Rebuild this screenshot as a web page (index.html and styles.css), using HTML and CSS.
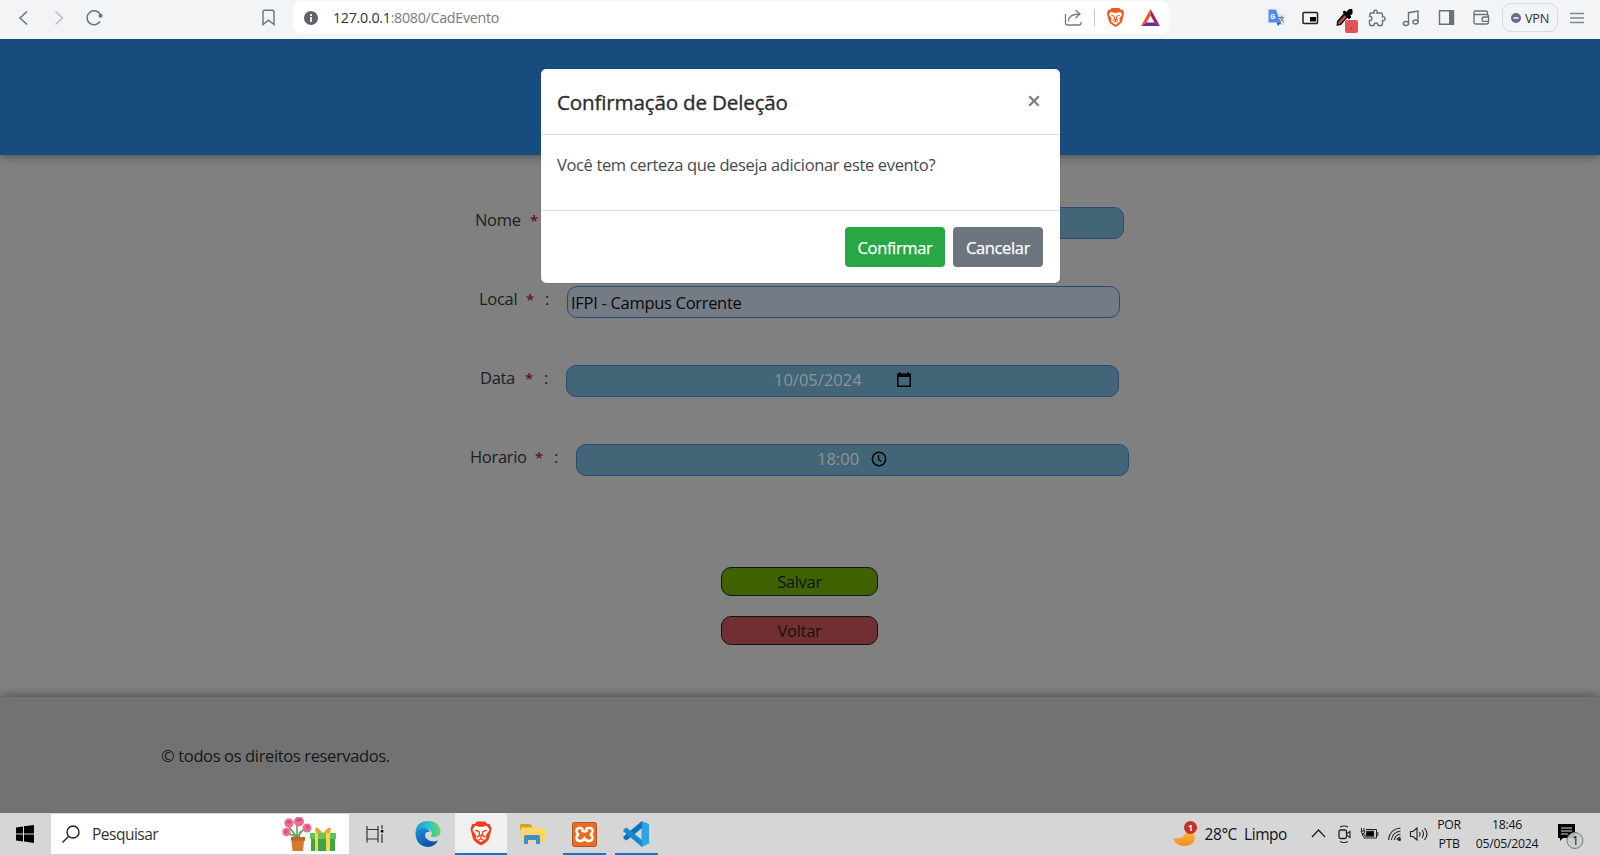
FILE: index.html
```html
<!DOCTYPE html>
<html lang="pt-BR">
<head>
<meta charset="utf-8">
<title>CadEvento</title>
<link rel="stylesheet" href="styles.css">
</head>
<body>
<div class="screen">
  <div class="toolbar">
    <div class="nav">
      <svg class="cell" viewBox="0 0 35 35"><path d="M21 11.500l-7 6.500 7 6.500" fill="none" stroke="#66737b" stroke-width="1.500"/></svg>
      <svg class="cell" viewBox="0 0 35 35"><path d="M14.500 11.500l7 6.500-7 6.500" fill="none" stroke="#b8bec3" stroke-width="1.500"/></svg>
      <svg class="cell" viewBox="-1 0 35 35"><path d="M23 21.500A7 7 0 1 1 23.500 15" fill="none" stroke="#66737b" stroke-width="1.500"/><circle cx="23.500" cy="15.800" r="2" fill="#66737b"/></svg>
      <svg class="cell bookmark" viewBox="0 0 35 35"><path d="M12 12q0-1.800 1.800-1.800h7.400q1.800 0 1.800 1.800v12.500l-5.500-4.300-5.500 4.300z" fill="none" stroke="#66737b" stroke-width="1.400"/></svg>
    </div>
    <div class="address">
      <svg width="14" height="14" viewBox="0 0 14 14"><circle cx="7" cy="7" r="7" fill="#5f6268"/><path d="M7 6v5M7 3v2" stroke="#fff" stroke-width="1.700"/></svg>
      <span class="url"><b>127.0.0.1</b>:8080/CadEvento</span>
      <svg class="share" width="18" height="18" viewBox="0 0 18 18" fill="none" stroke="#767a7e" stroke-width="1.300"><path d="M1.500 5v9q0 2 2 2H15q2 0 2-2v-1M4.500 12.500q0-7.500 11-7.500M11.500 1l4.500 4-4.500 4"/></svg>
      <i class="sep"></i>
      <svg class="shield" width="17" height="19" viewBox="0 0 18 20"><path d="M5 0h8l2 2h2l1 4-2 8q-1 3-7 6-6-3-7-6L0 6l1-4h2z" fill="#f1581c"/><path d="M4 4l3 1h4l3-1 2 3-3 4 1 3-5 4-5-4 1-3-3-4z" fill="#fff"/><path d="M4.500 7.500l3 1L8 12l-2 1.500M13.500 7.500l-3 1L10 12l2 1.500M9 11v3M7 15l2-1 2 1" stroke="#f1581c" stroke-width="1.100" fill="none"/></svg>
      <svg width="19" height="17" viewBox="0 0 19 17"><path d="M9.500 0L0 17l5.500-3.500 4-7z" fill="#ff4e20"/><path d="M9.500 0L19 17l-5.500-3.500-4-7z" fill="#9e1f63"/><path d="M0 17h19l-5.500-3.500h-8z" fill="#662d91"/></svg>
    </div>
    <div class="extensions">
      <svg class="cell" viewBox="-1 0 35 35"><path d="M17 14h8.500v11H18z" fill="#dfe3e8"/><path d="M9.500 9.500H17l5.500 15.500-3-2.500h-10z" fill="#548cf0"/><path d="M17.500 22.500h4.500l-3 3.500z" fill="#3858b8"/><path d="M20 17.500h5M22.500 16v1.500M24 18q-1 3-3.500 4M21 18l4 4.500" stroke="#788087" stroke-width="1" fill="none"/><text class="g-letter" x="11.200" y="19">G</text></svg>
      <svg class="cell" viewBox="0 0 35 35"><rect x="10" y="12.500" width="14.500" height="11" rx="1" fill="none" stroke="#202124" stroke-width="1.500"/><path d="M17 17h6v4.500h-6z"/></svg>
      <div class="cell dropper">
        <svg width="35" height="35" viewBox="0 0 35 35"><path d="M8.500 26l.5-5 7-8 4 4-7 8z" fill="#111"/><path d="M10 24.500l.5-2.500 6-6.500 1.800 1.500-6 6.500z" fill="#d84a4a"/><path d="M15 12l2-1 6 6-2 2zM18 13l3-3.500h3v4l-3 3z" stroke="#000" stroke-width="1"/></svg>
        <span class="dot-badge">.</span>
      </div>
      <svg class="cell" viewBox="0 0 35 35"><path d="M7.500 13h3.500q-1-2.700 1.500-2.700T14 13h4q1.500 0 1.500 1.500V17q2.500-.5 2.500 1.700t-2.500 1.800V24q0 1.500-1.500 1.500h-3q0-2.500-2-2.500t-2 2.500H8q-1.500 0-1.500-1.500v-3.500Q9 20.300 9 18.500T6.500 16z" fill="none" stroke="#66737b" stroke-width="1.400"/></svg>
      <svg class="cell music" viewBox="0 0 35 35" fill="none" stroke="#66737b" stroke-width="1.400"><ellipse cx="12" cy="23.500" rx="2.600" ry="2"/><ellipse cx="21.500" cy="22" rx="2.600" ry="2"/><path d="M14.500 23.500V12.700L24 11v11"/></svg>
      <svg class="cell" viewBox="0 0 35 35"><path d="M10.500 10.800h14v13.500h-14z" fill="none" stroke="#66737b" stroke-width="1.400"/><path d="M20 10.500h5v14h-5z" fill="#66737b"/></svg>
      <svg class="cell" viewBox="0 0 35 35" fill="none" stroke="#66737b" stroke-width="1.300"><path d="M23.500 14.500v-2q0-1.500-1.500-1.500H11.500Q10 11 10 12.500V22q0 2 2 2h10.500q2 0 2-2v-5.500q0-2-2-2H10"/><path d="M24.500 17H20q-2 0-2 2.200t2 2.200h4.500"/></svg>
      <div class="vpn"><svg width="10" height="10" viewBox="0 0 10 10"><circle cx="5" cy="5" r="5" fill="#686c91"/><path d="M2.500 5h5" stroke="#fff" stroke-width="1.500"/></svg><span>VPN</span></div>
      <svg class="menu" width="14" height="12" viewBox="0 0 14 12"><path d="M0 1.500h14M0 6h14M0 10.500h14" stroke="#7e898f" stroke-width="1.400"/></svg>
    </div>
  </div>

  <header class="site-header"></header>

  <main class="page">
    <form class="form">
      <div class="row"><label class="label nome"><span>Nome</span><em>*</em><span>:</span></label><div class="field"></div></div>
      <div class="row"><label class="label local"><span>Local</span><em>*</em><span>:</span></label><div class="field select">IFPI - Campus Corrente</div></div>
      <div class="row"><label class="label data"><span>Data</span><em>*</em><span>:</span></label><div class="field date"><span>10/05/2024</span><svg width="14" height="15" viewBox="0 0 14 15"><path d="M0 1.500h2V0h1.500v1.500h7V0H12v1.500h2V15H0zM1.500 5v8.500h11V5z" fill-rule="evenodd"/></svg></div></div>
      <div class="row"><label class="label horario"><span>Horario</span><em>*</em><span>:</span></label><div class="field time"><span>18:00</span><svg width="16" height="16" viewBox="0 0 16 16" fill="none" stroke="#000"><circle cx="8" cy="8" r="6.700" stroke-width="1.500"/><path d="M7.500 4v4.500l3 2" stroke-width="1.300"/></svg></div></div>
    </form>
    <div class="actions">
      <div class="action save">Salvar</div>
      <div class="action back">Voltar</div>
    </div>
  </main>

  <footer class="site-footer"><span>© todos os direitos reservados.</span></footer>

  <div class="taskbar">
    <div class="start"><svg width="18" height="18" viewBox="0 0 18 18"><path d="M0 2.500L7 1.500v7H0zM8 1.300L18 0v8.500H8zM0 9.500h7v7l-7-1zM8 9.500h10V18L8 16.500z"/></svg></div>
    <div class="search">
      <svg width="18" height="18" viewBox="0 0 18 18" fill="none" stroke="#222" stroke-width="1.400"><circle cx="11" cy="7" r="6"/><path d="M6.500 11.500L.5 17.500"/></svg>
      <span>Pesquisar</span>
      <svg class="gift" width="54" height="35" viewBox="0 0 54 35">
        <path d="M15 20L7 10M15 20V8M15 20l8-9M15 20L5 16" stroke="#5d9c59" stroke-width="1.500"/><path d="M10 13l5 7 4-8-1 8h-6z" fill="#66a65f"/>
        <g fill="#ec6f91"><circle cx="7" cy="6" r="4.700"/><circle cx="17" cy="4.500" r="5"/><circle cx="25" cy="11" r="4.500"/><circle cx="4.500" cy="15" r="4.200"/></g>
        <g fill="#d84d78"><ellipse cx="7" cy="5" rx="2.500" ry="1.500"/><ellipse cx="17" cy="3" rx="3" ry="1.500"/><ellipse cx="25.500" cy="10" rx="1.500" ry="2.300"/><ellipse cx="4" cy="14.500" rx="1.500" ry="2"/></g>
        <path d="M9 20h14v4h-1l-1 10H10.500L9.500 24z" fill="#d47a2e"/><path d="M9 20h14v3.500H9z" fill="#b96724"/>
        <path d="M29 18h24v16H29z" fill="#41a348"/><path d="M28 16h26v6H28z" fill="#64c454"/><path d="M33 16h3v18h-3zM44 16h4v18h-4z" fill="#f6d64a"/><path d="M41 16q-7-8-8-4l1 4zM41 16q7-8 8-4l-1 4z" fill="#e8a92c"/>
      </svg>
    </div>
    <div class="app taskview"><svg width="18" height="18" viewBox="0 0 18 18" fill="none" stroke="#333" stroke-width="1.200"><path d="M1 1v3.500h11V1M1 17.500V14h11v3.500M1 4.500V14M12 4.500V14M16 0v4M16 9v9"/><path d="M14.800 5h2.500v2.500h-2.500z" fill="#000" stroke="none"/></svg></div>
    <div class="app edge"><svg width="26" height="26" viewBox="0 0 26 26"><defs><linearGradient id="eg" x1="0" x2="1"><stop offset="0" stop-color="#1a99dc"/><stop offset=".55" stop-color="#35c1c5"/><stop offset="1" stop-color="#66da59"/></linearGradient><linearGradient id="eb" x2=".6" y2="1"><stop offset="0" stop-color="#1b95d6"/><stop offset="1" stop-color="#0c4fa3"/></linearGradient></defs><path d="M.5 12Q1 0 13.500 0C22 0 26 6 25.500 11.500 25 16 19 17 16 15.500c2-4 0-7-4-7.500Q5 7.500.5 12z" fill="url(#eg)"/><path d="M.5 12Q4 6 10 7.500q4 .5 5 3.500-4-1-5 3c0 5 7 8 13 5.500Q20 26 12.500 26 1 25 .5 12z" fill="url(#eb)"/></svg></div>
    <div class="app brave"><svg width="22" height="25" viewBox="0 0 22 26"><path d="M6.500.5h9l2 2.500h2.500L22 8l-2.500 10q-1.500 4-8.500 7.500Q4 22 2.500 18L0 8l2-5h2.500z" fill="#f43d1b"/><path d="M5 5l4 1h4l4-1 3 4-4 6 .5 3-5.500 4-5.500-4 .5-3-4-6z" fill="#fff"/><path d="M5 9.500l4 1.500.5 4-3 2M17 9.500L13 11l-.5 4 3 2M11 14v4M8.500 20l2.500-1.500 2.500 1.500" stroke="#f43d1b" stroke-width="1.400" fill="none"/></svg></div>
    <div class="app folder"><svg width="25" height="21" viewBox="0 0 25 21"><path d="M1 0h9l2 2v4H0V1z" fill="#d6a023"/><path d="M1 3.500h23q1 0 1 1V18H1z" fill="#fbd765"/><path d="M4 13q0-2 2-2h12q2 0 2 2v7h-4v-4H8v4H4z" fill="#3c8dd2"/></svg></div>
    <div class="app xampp open"><svg width="25" height="25" viewBox="0 0 25 25"><rect x=".5" y=".5" width="24" height="24" rx="2" fill="#ea6c20" stroke="#b3551e"/><path d="M8 6Q4 6 4.500 9.500q.5 2.500 2.500 3-2.500.5-2.500 3.500Q4.500 19 8 19q3 0 4.500-2.500Q14 19 17 19t3.500-3q0-3-2.500-3.500 2-.5 2.500-3Q21 6 17 6t-2.500 3q-2 1-4 0Q11 6 8 6z" fill="none" stroke="#fff" stroke-width="2.500"/></svg></div>
    <div class="app vscode open"><svg width="26" height="26" viewBox="0 0 26 26"><path d="M18.500 0L26 3v19.500L18.500 26z" fill="#2ba3e8"/><path d="M19 0v7L3.500 19.500.5 17.500v-2z" fill="#0871b9"/><path d="M19 26v-7L3.500 6.500.5 8.500v2z" fill="#168bd2"/></svg></div>

    <div class="weather"><svg width="25" height="26" viewBox="0 0 25 26"><defs><linearGradient id="moon" y2="1" x2="0"><stop stop-color="#ffc43b"/><stop offset="1" stop-color="#ef8c25"/></linearGradient></defs><path d="M0 17q13 2 13-9 8 2 9 9-1 8-11 8Q3 25 0 17z" fill="url(#moon)"/><circle cx="17.500" cy="6.500" r="6.500" fill="#cb2c25"/><text class="count" x="15" y="10">1</text></svg><span>28°C&nbsp; Limpo</span></div>
    <svg class="tray" width="140" height="20" viewBox="0 0 140 20" fill="none" stroke="#222" stroke-width="1.300">
      <path d="M1 13l6.500-7 6.500 7"/>
      <rect x="28" y="6" width="7.500" height="8.500" rx="1.500"/><path d="M36 9.500l3-2v6l-3-2M29 3q4-2 8 0M29 17.500q4 2 8 0" stroke-width="1.100"/>
      <path d="M55 5.500h10.500v8.500H53v-4" stroke-width="1"/><path d="M56 7.500h6.500v4.500H55z" fill="#000"/><path d="M66.800 8v4M50.500 4v3M53 4v3M50 7h4l-1 2.500h-2zM51.500 10v2" stroke-width="1"/>
      <g stroke-width="1.100"><path d="M77.500 16q1-11 12-12M80.500 16q1-8 9-9M83.500 16q.5-5 6-6M86 16q.5-2.500 3.500-3"/><circle cx="88.500" cy="15.500" r="1" fill="#222"/></g>
      <path d="M99.500 7.500h2.500l4-3.500v12l-4-3.500h-2.500zM108.500 8q1.500 2 0 4.500M111 6q3 4 0 8M113.500 4q5 6 0 12" stroke-width="1.100"/>
    </svg>
    <div class="lang"><span>POR</span><span>PTB</span></div>
    <div class="clock"><span>18:46</span><span>05/05/2024</span></div>
    <div class="notify"><svg width="26" height="26" viewBox="0 0 26 26"><path d="M0 0h17v14H5l-3 3v-3H0z"/><path d="M3 4h11M3 7h11M3 10h7" stroke="#ddd" stroke-width="1.200"/><circle cx="17" cy="16.500" r="8" fill="#ccc" fill-opacity=".9" stroke="#777"/><text class="bell" x="14" y="21">1</text></svg></div>
  </div>

  <div class="modal">
    <div class="modal-header"><h5>Confirmação de Deleção</h5><svg width="12" height="12" viewBox="0 0 12 12"><path d="M1.200 1.200l9.600 9.600M10.800 1.200l-9.600 9.600" stroke="#7d7d7d" stroke-width="2.200"/></svg></div>
    <div class="modal-body">Você tem certeza que deseja adicionar este evento?</div>
    <div class="modal-footer"><button class="btn confirm" type="button">Confirmar</button><button class="btn cancel" type="button">Cancelar</button></div>
  </div>
</div>
</body>
</html>
```
FILE: styles.css
```css
* { box-sizing: border-box; }
body { margin: 0; font-family: "Open Sans", "Noto Sans", sans-serif; font-size: 16.5px; color: #111315; }
svg { display: block; flex: none; }
.screen { position: relative; width: 1600px; height: 855px; overflow: hidden; display: flex; flex-direction: column; background: #808080; }

/* Browser toolbar */
.toolbar { position: relative; z-index: 1; flex: none; height: 39px; display: flex; background: #f2f4f6; }
.nav { width: 293px; display: flex; padding-left: 6px; }
.cell { width: 35px; height: 35px; flex: none; }
.bookmark { margin-left: 140px; }
.address { width: 876px; height: 33px; margin-top: 1px; display: flex; align-items: center; padding: 0 9px 0 11px; border-radius: 8px; background: #fff; }
.url { flex: 1; padding-left: 15px; font-size: 14.3px; letter-spacing: -.3px; color: #777a7e; white-space: nowrap; }
.url b { font-weight: 400; color: #333; }
.sep { width: 1px; height: 17px; margin: 0 12px 0 12px; background: #c5c8cb; }
.shield { margin-right: 17px; }
.extensions { display: flex; padding-left: 89px; }
.g-letter { font: 700 7px Roboto, sans-serif; fill: #fff; }
.dropper { position: relative; }
.music { margin-left: -4px; }
.dot-badge { position: absolute; left: 17px; top: 20px; width: 13px; height: 13px; border-radius: 2px; background: #de5555; font-size: 9px; line-height: 11px; text-align: center; }
.vpn { width: 56px; height: 29px; margin: 3px 0 0 3px; display: flex; align-items: center; justify-content: center; gap: 4px; border: 1px solid #d6dce3; border-radius: 9px; font-size: 12.8px; letter-spacing: -.3px; color: #303338; }
.menu { margin: 12px 0 0 12px; }

/* Page */
.site-header { flex: none; height: 116px; background: #194c7e; box-shadow: 0 0 10px #404040; }
.page { flex: none; height: 542px; display: flex; flex-direction: column; align-items: center; padding-top: 52px; }
.form { display: flex; flex-direction: column; gap: 47px; margin-left: -1px; }
.row { height: 32px; display: flex; justify-content: center; align-items: flex-start; }
.label { display: flex; line-height: 26px; color: #1c1e20; letter-spacing: -.3px; }
.label em { margin-left: auto; margin-right: 11px; font-size: 15px; font-style: normal; font-weight: 600; color: #621216; }
.label span:last-child { margin-right: 18px; }
.nome { width: 96px; }
.local { width: 88px; }
.data { width: 86px; }
.horario { width: 106px; }
.field { width: 553px; height: 32px; display: flex; align-items: center; border: 1px solid #2b4a76; border-radius: 10px; background: #426578; color: #8f9497; }
.field span { margin-top: -3px; }
.select { padding-left: 3px; background: #757b85; color: #08090a; letter-spacing: -.3px; }
.date { padding-left: 207px; }
.date svg { margin: -4px 0 0 35px; }
.time { padding-left: 240px; }
.time svg { margin: -3px 0 0 12px; }
.actions { display: flex; flex-direction: column; gap: 20px; margin: 91px 0 0 -1px; }
.action { width: 157px; height: 29px; border: 1px solid #101510; border-radius: 10px; text-align: center; line-height: 28px; letter-spacing: -.3px; color: #101410; }
.save { background: #3f6200; }
.back { background: #722f31; }
.site-footer { flex: none; height: 116px; padding: 47px 0 0 161px; background: #727272; box-shadow: 0 0 10px #404040; line-height: 24px; letter-spacing: -.36px; color: #15171a; }

/* Taskbar */
.taskbar { position: relative; flex: none; height: 42px; display: flex; align-items: center; background: #d6d6d6; }
.start { width: 51px; padding-left: 16px; }
.search { width: 298px; height: 40px; display: flex; align-items: center; padding-left: 11px; background: #fff; font-size: 15.5px; letter-spacing: -.5px; color: #333; }
.search span { flex: 1; padding-left: 12px; }
.gift { margin-right: 13px; }
.app { width: 51.600px; height: 42px; display: flex; align-items: center; justify-content: center; }
.taskview { width: 52px; }
.edge { width: 54px; }
.brave { background: #f0f0f0; border-bottom: 2px solid #0e78cf; }
.open svg { margin-bottom: -2px; }
.open { width: 43px; margin: 0 4.500px; border-bottom: 2px solid #0e78cf; }
.weather { display: flex; align-items: center; gap: 7px; margin-left: auto; font-size: 15.5px; letter-spacing: -.45px; white-space: nowrap; }
.count { font: 700 9px "Open Sans", sans-serif; fill: #fff; }
.tray { margin-left: 24px; }
.lang, .clock { display: flex; flex-direction: column; align-items: center; font-size: 12.3px; line-height: 19px; letter-spacing: -.3px; }
.lang { width: 26px; margin-left: -15px; }
.clock { width: 66px; margin-left: 12px; }
.notify { margin: 6px 16px 0 18px; }
.bell { font: 12px "Open Sans", sans-serif; fill: #111; }

/* Confirmation dialog */
.modal { position: absolute; z-index: 2; left: 541px; top: 69px; width: 519px; height: 214px; border-radius: 5px; background: #fff; box-shadow: 0 0 1px #333; color: #46494c; }
.modal-header { height: 66px; display: flex; justify-content: space-between; align-items: flex-start; padding: 26px 20px 0 16px; border-bottom: 1px solid #dee2e6; }
.modal-header h5 { margin: -8px 0 0; font-size: 20.6px; line-height: 30px; font-weight: 500; letter-spacing: -.17px; color: #2a2d30; -webkit-text-stroke: .35px #2a2d30; }
.modal-body { height: 76px; padding: 17px 16px; line-height: 25px; letter-spacing: -.36px; border-bottom: 1px solid #dee2e6; white-space: nowrap; }
.modal-footer { display: flex; justify-content: flex-end; gap: 8px; padding: 16px 17px; }
.btn { height: 40px; padding: 0; border: 0; border-radius: 4px; font: 500 16.5px "Open Sans", sans-serif; letter-spacing: -.35px; color: #fff; -webkit-text-stroke: .25px #fff; }
.confirm { width: 100px; background: #28a745; }
.cancel { width: 90px; background: #6c757d; }
```
